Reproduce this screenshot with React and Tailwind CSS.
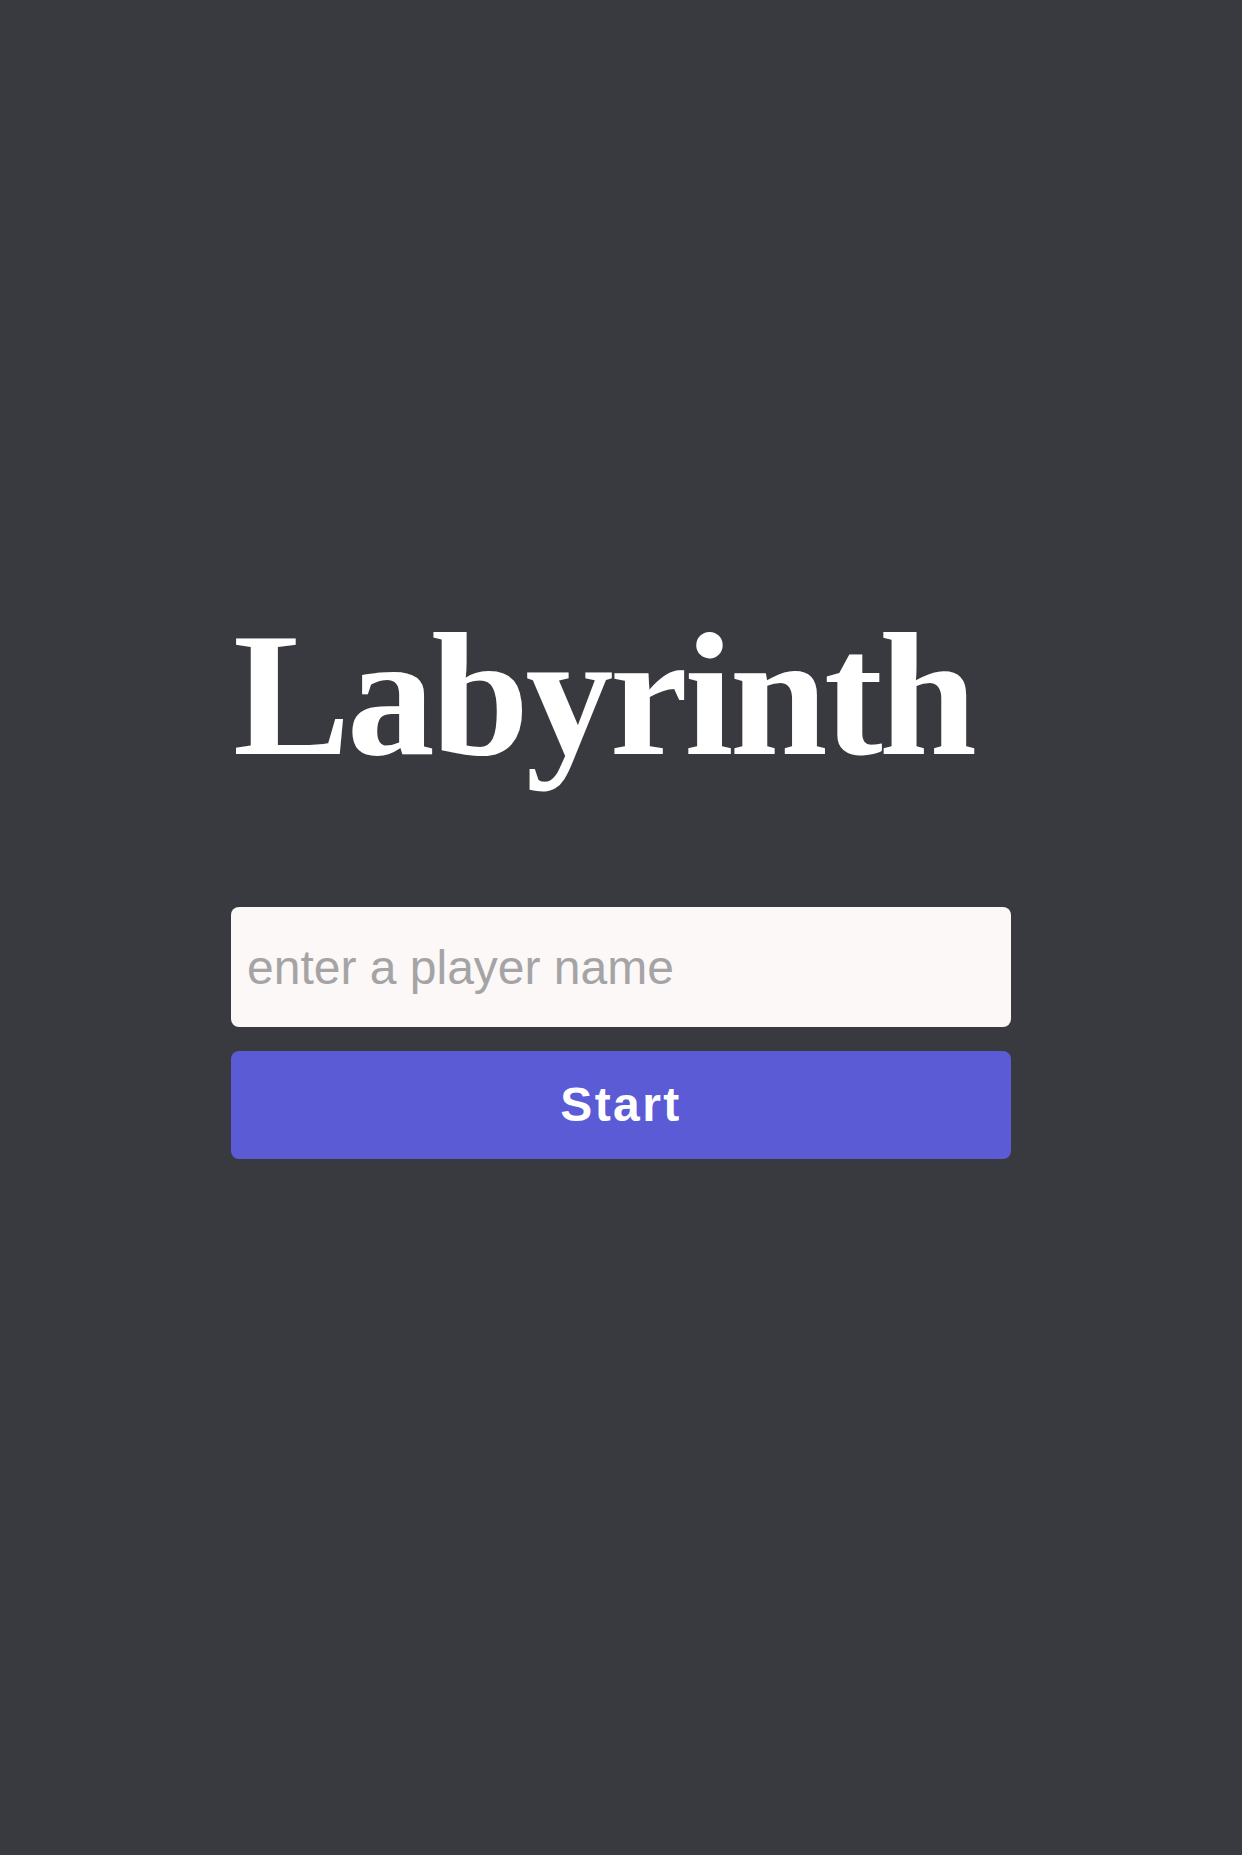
export default function App() {
  return (
    <div className="min-h-screen w-full bg-[#393a3f] flex flex-col items-center pt-[607px] font-['Liberation_Sans',Arial,sans-serif]">
      <div className="w-[780px] flex flex-col">
        {/* Title */}
        <h1 className="pl-[2px] text-[176px] leading-none font-bold text-white tracking-[-3.6px] font-['Liberation_Serif','DejaVu_Serif',serif]">
          Labyrinth
        </h1>

        {/* Form */}
        <div className="mt-[124px] flex flex-col gap-6">
          <input
            type="text"
            placeholder="enter a player name"
            className="h-[120px] w-full rounded-lg bg-[#fcf8f7] pl-4 text-[48px] text-gray-800 placeholder:text-[#a4a4a6] outline-none"
          />
          <button className="h-[108px] w-full rounded-lg bg-[#5b5bd6] text-white text-[48px] font-bold tracking-[0.05em]">
            Start
          </button>
        </div>
      </div>
    </div>
  );
}
